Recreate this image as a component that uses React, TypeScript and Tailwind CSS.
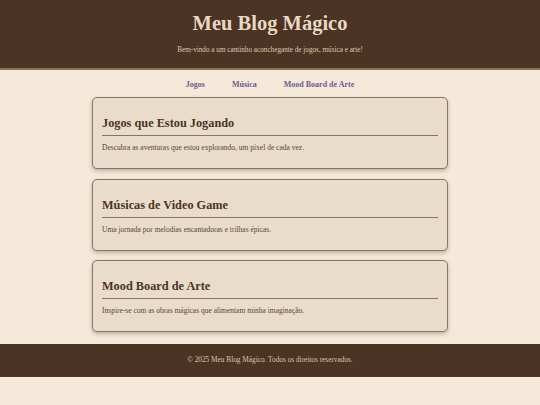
const sections = [
  {
    title: "Jogos que Estou Jogando",
    text: "Descubra as aventuras que estou explorando, um pixel de cada vez.",
  },
  {
    title: "Músicas de Video Game",
    text: "Uma jornada por melodias encantadoras e trilhas épicas.",
  },
  {
    title: "Mood Board de Arte",
    text: "Inspire-se com as obras mágicas que alimentam minha imaginação.",
  },
];

export default function App() {
  return (
    <div className="min-h-[405px] bg-[#f5e9da] font-['Liberation_Serif',serif]">
      <header className="bg-[#4b3423] border-b-2 border-[#8b7357] text-center pt-[11px] h-[70px]">
        <h1 className="text-[20.5px] font-bold text-[#e9d8c2] leading-[24px]">Meu Blog Mágico</h1>
        <p className="mt-[10px] text-[7.2px] text-[#dcc9b3]">
          Bem-vindo a um cantinho aconchegante de jogos, música e arte!
        </p>
      </header>

      <nav className="flex justify-center gap-[27px] pt-[9px] pb-[6px] text-[8px] font-bold text-[#6e5a8a]">
        <a>Jogos</a>
        <a>Música</a>
        <a>Mood Board de Arte</a>
      </nav>

      <main className="w-[356px] mx-auto flex flex-col gap-[9.5px]">
        {sections.map((s) => (
          <section
            key={s.title}
            className="h-[72px] bg-[#e9dccb] border border-[#8b7560] rounded-[5px] shadow-[0_2px_4px_rgba(0,0,0,0.25)] px-[9px] pt-[17px]"
          >
            <h2 className="text-[12.3px] font-bold text-[#4b3423] leading-[16px] pb-[4px] border-b-[1.5px] border-[#8b7560]">
              {s.title}
            </h2>
            <p className="mt-[6px] text-[7.5px] text-[#5a4535]">{s.text}</p>
          </section>
        ))}
      </main>

      <footer className="mt-[12px] h-[33px] bg-[#4b3423] flex items-center justify-center text-[7.3px] text-[#d8c6b0]">
        © 2025 Meu Blog Mágico. Todos os direitos reservados.
      </footer>
    </div>
  );
}
